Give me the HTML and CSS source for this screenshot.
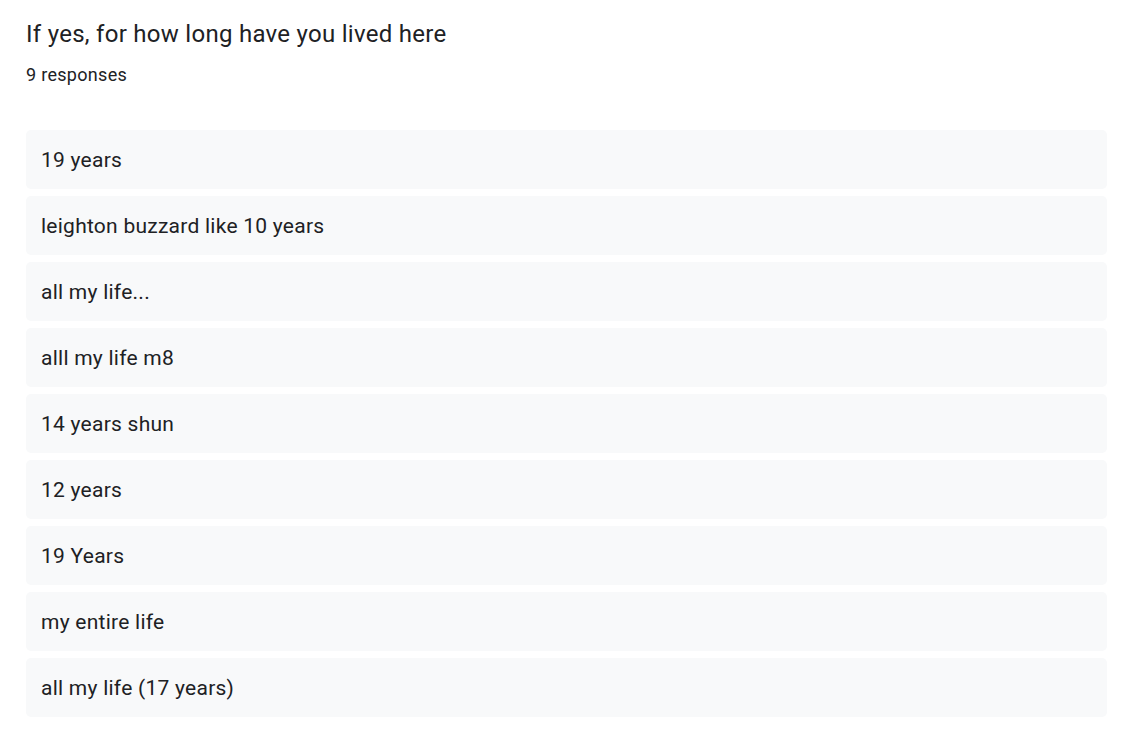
FILE: index.html
```html
<!DOCTYPE html>
<html>
<head>
<meta charset="utf-8">
<link rel="stylesheet" href="styles.css">
</head>
<body>
<div class="card">
  <div class="title">If yes, for how long have you lived here</div>
  <div class="count">9 responses</div>
  <div class="list">
    <div class="row">19 years</div>
    <div class="row">leighton buzzard like 10 years</div>
    <div class="row">all my life...</div>
    <div class="row">alll my life m8</div>
    <div class="row">14 years shun</div>
    <div class="row">12 years</div>
    <div class="row">19 Years</div>
    <div class="row">my entire life</div>
    <div class="row">all my life (17 years)</div>
  </div>
</div>
</body>
</html>
```
FILE: styles.css
```css
html, body {
  margin: 0;
  padding: 0;
  background: #ffffff;
}
body {
  font-family: Roboto, "Liberation Sans", Arial, sans-serif;
  color: #202124;
}
.card {
  padding: 18px 21px 0 26px;
}
.title {
  font-size: 24px;
  line-height: 32px;
  letter-spacing: 0.28px;
}
.count {
  margin-top: 14px;
  font-size: 18px;
  line-height: 22px;
  letter-spacing: 0.3px;
}
.list {
  margin-top: 44px;
  display: flex;
  flex-direction: column;
  gap: 7px;
}
.row {
  background: #f8f9fa;
  border-radius: 5px;
  height: 59px;
  display: flex;
  align-items: center;
  padding: 0 15px;
  font-size: 21px;
  letter-spacing: 0.25px;
}
```
